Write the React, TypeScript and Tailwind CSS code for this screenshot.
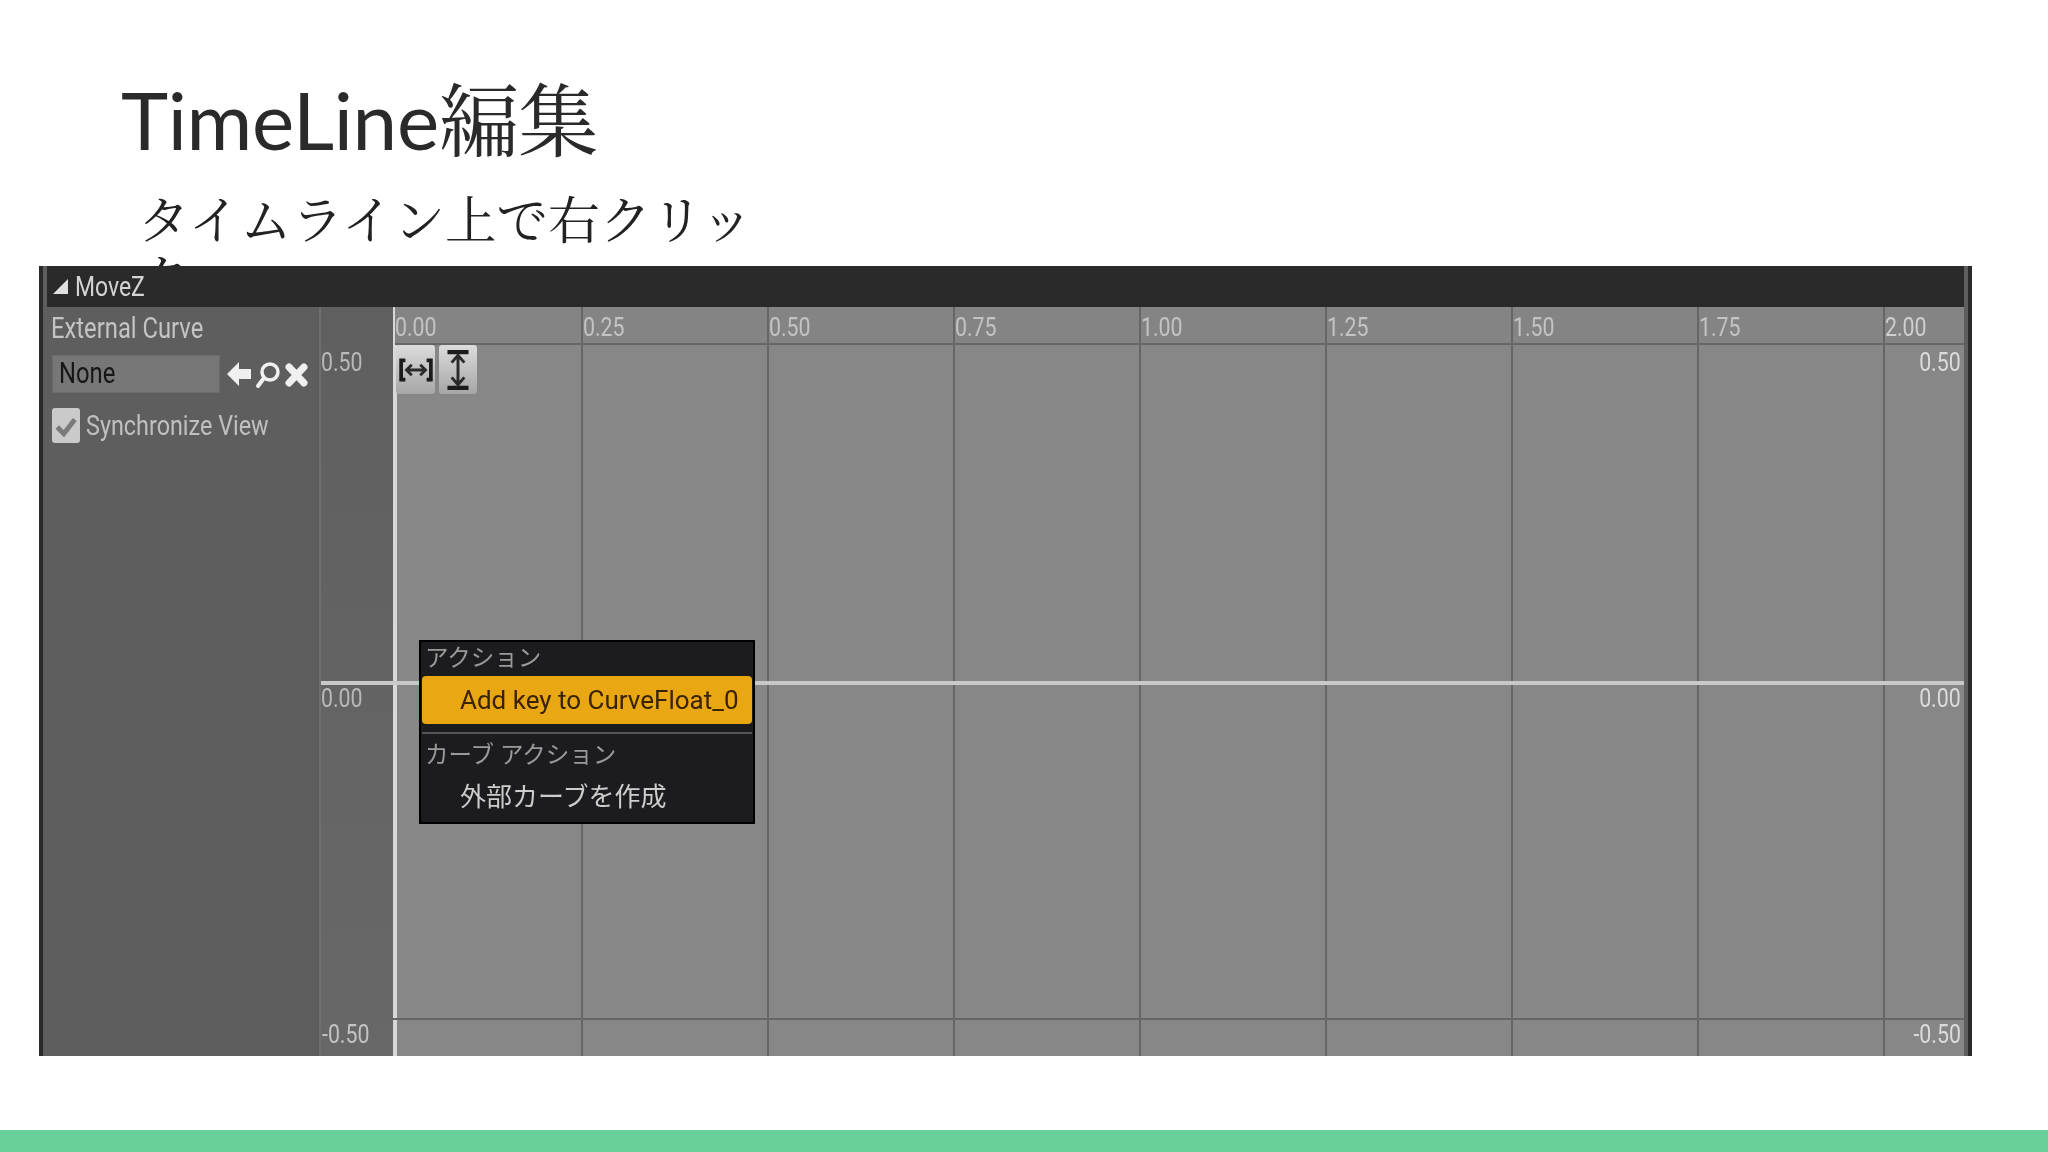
import React from "react";

const RULER = ["0.00", "0.25", "0.50", "0.75", "1.00", "1.25", "1.50", "1.75"];

// the source capture uses a condensed UI font, Roboto squeezed gets close
const Narrow = ({ children, right }: { children: React.ReactNode; right?: boolean }) => (
  <span className={`inline-block whitespace-nowrap scale-x-[0.82] ${right ? "origin-right" : "origin-left"}`}>
    {children}
  </span>
);

const Sidebar = () => (
  <div className="w-[272px] shrink-0 bg-[#5e5e5e] pl-[5px] pt-[6px]">
    <div className="-ml-[1px] text-[29px] leading-[30px] text-[#c4c4c4]">
      <Narrow>External Curve</Narrow>
    </div>
    <div className="mt-[12px] flex items-center">
      <div className="flex h-[38px] w-[168px] items-center bg-[#777777] pl-[7px] text-[29px] text-[#161616] shadow-[inset_0_0_0_1px_#6a6a6a]">
        <Narrow>None</Narrow>
      </div>
      <svg viewBox="0 0 84 30" className="ml-[7px] h-[30px] w-[84px] text-[#f0f0f0]">
        <path d="M0 15 L12 3 L12 10 L24 10 L24 20 L12 20 L12 27 Z" fill="currentColor" />
        <circle cx="43" cy="13" r="8" fill="none" stroke="currentColor" strokeWidth="3.5" />
        <path d="M37 19 L31 27" stroke="currentColor" strokeWidth="4" strokeLinecap="round" />
        <path d="M62 8 L77 24 M77 8 L62 24" stroke="currentColor" strokeWidth="7" strokeLinecap="round" />
      </svg>
    </div>
    <div className="mt-[15px] flex items-center">
      <div className="flex h-[35px] w-[28px] items-center justify-center rounded-[3px] bg-[#cacaca]">
        <svg viewBox="0 0 20 20" className="h-[22px] w-[22px]">
          <path d="M2 11 L8 17 L18 4" fill="none" stroke="#7a7a7a" strokeWidth="4.5" />
        </svg>
      </div>
      <span className="ml-[6px] text-[28.5px] leading-[34px] text-[#c0c0c0]">
        <Narrow>Synchronize View</Narrow>
      </span>
    </div>
  </div>
);

const AxisButtons = () => (
  <div className="-ml-[1px] flex gap-[4px]">
    <div className="flex h-[49px] w-[39px] items-center justify-center rounded-[3px] bg-gradient-to-b from-[#dcdcdc] to-[#a6a6a6]">
      <svg viewBox="0 0 32 24" className="h-[26px] w-[34px]">
        <path d="M6 3 H2 V21 H6 M26 3 H30 V21 H26" fill="none" stroke="#1c1c1c" strokeWidth="3.5" />
        <path d="M7 12 H25 M12 7 L7 12 L12 17 M20 7 L25 12 L20 17" fill="none" stroke="#2b2b2b" strokeWidth="2.6" />
      </svg>
    </div>
    <div className="flex h-[49px] w-[38px] items-center justify-center rounded-[3px] bg-gradient-to-b from-[#dcdcdc] to-[#a6a6a6]">
      <svg viewBox="0 0 24 38" className="h-[40px] w-[26px]">
        <path d="M2 2 H22 M2 36 H22" stroke="#1c1c1c" strokeWidth="4" />
        <path d="M12 5 V33 M6 12 L12 5 L18 12 M6 26 L12 33 L18 26" fill="none" stroke="#2b2b2b" strokeWidth="2.8" />
      </svg>
    </div>
  </div>
);

const ContextMenu = () => (
  <div className="absolute left-[100px] top-[333px] flex h-[184px] w-[336px] flex-col border-[2px] border-black bg-[#1c1c1f] px-[1px] font-['Roboto','Noto_Sans_CJK_JP',sans-serif]">
    <div className="flex h-[34px] items-center pl-[3px] text-[23.5px] leading-none text-[#9a9a9a]">アクション</div>
    <div className="flex h-[48px] items-center rounded-[4px] bg-[#e9a713] pl-[38px] text-[26px] leading-none text-[#3a2303]">
      Add key to CurveFloat_0
    </div>
    <div className="mt-[8px] h-[2px] bg-[#555558]" />
    <div className="flex h-[44px] items-center pl-[3px] text-[23.5px] leading-none text-[#9a9a9a]">カーブ アクション</div>
    <div className="flex h-[38px] items-center pl-[38px] text-[26px] leading-none text-[#cdcdcd]">外部カーブを作成</div>
  </div>
);

const Chart = () => (
  <div className="relative flex min-w-0 flex-1 text-[26px] leading-[30px] text-[#cfcfcf]">
    {/* value gutter */}
    <div className="flex w-[74px] shrink-0 flex-col justify-between border-l-[2px] border-[#6f6f6f] bg-gradient-to-b from-[#5f5f5f] to-[#686868] pb-[7px] pt-[40px] text-[#b9b9b9]">
      <span><Narrow>0.50</Narrow></span>
      <span><Narrow>0.00</Narrow></span>
      <span className="pl-[1px] text-[#c4c4c4]"><Narrow>-0.50</Narrow></span>
    </div>
    <div className="w-[4px] shrink-0 bg-[#d8d8d8]" />

    {/* time columns */}
    {RULER.map((t, i) => (
      <div
        key={t}
        className={`flex shrink-0 flex-col bg-[#878787] ${i === 0 ? "w-[184px]" : "w-[186px] border-l-[2px] border-[#666666]"}`}
      >
        <div className={`h-[38px] border-b-[2px] border-[#666666] bg-[#848484] pt-[5px] text-[#c4c4c4] ${i === 0 ? "-ml-[2px]" : ""}`}>
          <Narrow>{t}</Narrow>
        </div>
        {i === 0 && <AxisButtons />}
      </div>
    ))}
    <div className="flex min-w-0 flex-1 flex-col border-l-[2px] border-[#666666] bg-[#878787]">
      <div className="h-[38px] border-b-[2px] border-[#666666] bg-[#848484] pt-[5px] text-[#d0d0d0]">
        <Narrow>2.00</Narrow>
      </div>
      <div className="flex flex-1 flex-col items-end justify-between pb-[7px] pr-[3px] pt-[2px] text-[#dcdcdc]">
        <span><Narrow right>0.50</Narrow></span>
        <span><Narrow right>0.00</Narrow></span>
        <span><Narrow right>-0.50</Narrow></span>
      </div>
    </div>

    {/* horizontal guides */}
    <div className="absolute left-[2px] right-0 top-[374px] h-[4px] bg-[#c9c9c9]" />
    <div className="absolute left-[2px] right-0 top-[711px] h-[2px] bg-[#666666]" />

    <ContextMenu />
  </div>
);

export default function App() {
  return (
    <div className="flex h-[1152px] w-[2048px] flex-col overflow-hidden bg-white">
      <div className="h-[266px] shrink-0 pl-[121px] pt-[70px]">
        <h1 className="text-[80px] font-normal leading-[98px] tracking-[-0.3px] text-[#2a2a2a] font-['Lato','Noto_Serif_CJK_JP','Noto_Sans_CJK_JP',serif]">
          TimeLine編集
        </h1>
        <p className="ml-[17px] mt-[20px] w-[640px] text-[51.6px] leading-[58px] text-[#222222] font-['Noto_Serif_CJK_JP','Noto_Sans_CJK_JP',serif]">
          タイムライン上で右クリック
        </p>
      </div>

      <div className="relative ml-[39px] flex h-[790px] w-[1933px] shrink-0 flex-col border-x-[4px] border-x-[#2a2a2a] bg-[#5e5e5e] pl-[4px] pr-[4px] font-['Roboto',sans-serif] blur-[0.7px]">
        <div className="flex h-[41px] shrink-0 items-center gap-[7px] bg-[#2a2a2a] pl-[6px] text-[28px] text-[#d4d4d4]">
          <svg viewBox="0 0 15 15" className="h-[15px] w-[15px]">
            <path d="M15 0 V15 H0 Z" fill="#e0e0e0" />
          </svg>
          <Narrow>MoveZ</Narrow>
        </div>
        <div className="-ml-[4px] flex min-h-0 flex-1">
          <div className="w-[4px] shrink-0" />
          <Sidebar />
          <Chart />
        </div>
      </div>

      <div className="flex-1" />
      <div className="h-[22px] shrink-0 bg-[#68d098]" />
    </div>
  );
}
